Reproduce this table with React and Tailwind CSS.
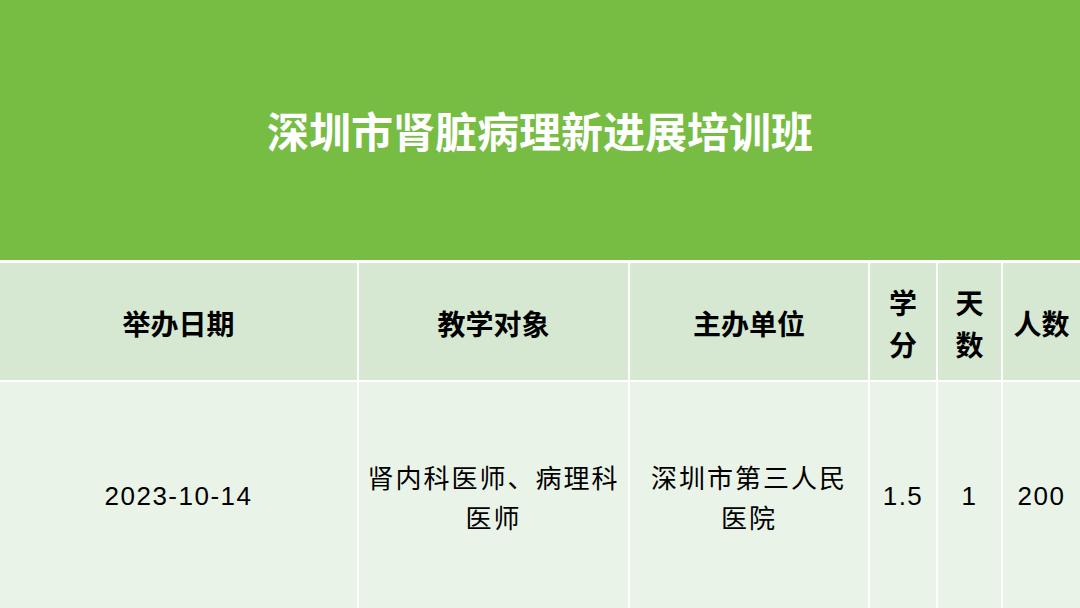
// App.jsx
const font = "font-['Liberation_Sans','Noto_Sans_CJK_SC',sans-serif]";

const App = () => {
    return (
        <div className={`w-[1080px] h-[608px] bg-white flex flex-col overflow-hidden ${font}`}>
            {/* Title Banner */}
            <div className="h-[260px] bg-[#77bc43] flex items-center justify-center">
                <h1 className="text-white text-[42px] font-bold leading-none pt-[8px]">深圳市肾脏病理新进展培训班</h1>
            </div>

            {/* Table */}
            <div className="mt-[3px] grid grid-cols-[357px_269px_238px_66px_63px_1fr] grid-rows-[117px_1fr] gap-[2px] flex-1 text-black">
                {/* Header Row */}
                <div className="bg-[#d6e8d1] flex items-center justify-center text-[28px] font-bold leading-[42px] pt-[8px]">举办日期</div>
                <div className="bg-[#d6e8d1] flex items-center justify-center text-[28px] font-bold leading-[42px] pt-[8px]">教学对象</div>
                <div className="bg-[#d6e8d1] flex items-center justify-center text-[28px] font-bold leading-[42px] pt-[8px]">主办单位</div>
                <div className="bg-[#d6e8d1] flex items-center justify-center text-[28px] font-bold leading-[42px] text-center pt-[8px]">学<br />分</div>
                <div className="bg-[#d6e8d1] flex items-center justify-center text-[28px] font-bold leading-[42px] text-center pt-[8px]">天<br />数</div>
                <div className="bg-[#d6e8d1] flex items-center justify-center text-[28px] font-bold leading-[42px] pt-[8px]">人数</div>

                {/* Body Row */}
                <div className="bg-[#eaf3e8] flex items-center justify-center text-[26px] tracking-[1.5px] leading-[40px] pt-[2px]">2023-10-14</div>
                <div className="bg-[#eaf3e8] flex items-center justify-center text-[26px] tracking-[2px] leading-[40px] text-center pt-[8px]">肾内科医师、病理科<br />医师</div>
                <div className="bg-[#eaf3e8] flex items-center justify-center text-[26px] tracking-[2px] leading-[40px] text-center pt-[8px]">深圳市第三人民<br />医院</div>
                <div className="bg-[#eaf3e8] flex items-center justify-center text-[26px] tracking-[1.5px] leading-[40px] pt-[2px]">1.5</div>
                <div className="bg-[#eaf3e8] flex items-center justify-center text-[26px] tracking-[1.5px] leading-[40px] pt-[2px]">1</div>
                <div className="bg-[#eaf3e8] flex items-center justify-center text-[26px] tracking-[1.5px] leading-[40px] pt-[2px]">200</div>
            </div>
        </div>
    );
};

export default App;
